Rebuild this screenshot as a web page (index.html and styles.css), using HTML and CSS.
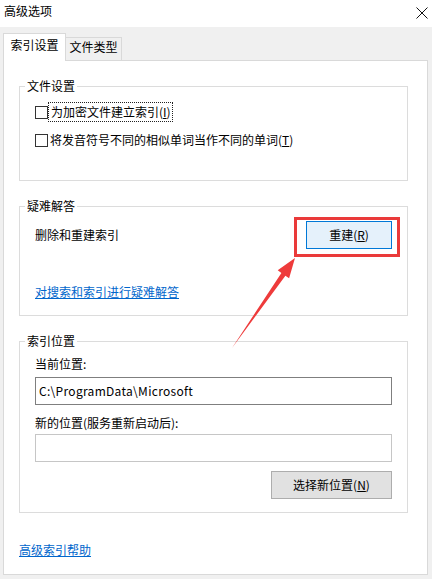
FILE: index.html
```html
<!DOCTYPE html>
<html lang="zh-CN">
<head>
<meta charset="utf-8">
<title>高级选项</title>
<link rel="stylesheet" href="styles.css">
</head>
<body>
<div class="dialog">
  <div class="titlebar">
    <span class="title">高级选项</span>
    <svg class="close" width="12" height="12" viewBox="0 0 12 12"><path d="M0.5 0.5L11.5 11.5M11.5 0.5L0.5 11.5" stroke="#111" stroke-width="1" fill="none"/></svg>
  </div>
  <div class="tabs">
    <div class="tab active">索引设置</div>
    <div class="tab">文件类型</div>
  </div>
  <div class="panel">
    <fieldset class="group">
      <legend>文件设置</legend>
      <div class="group-body g1">
        <div class="check-row"><span class="box"></span><span class="focus">为加密文件建立索引(<u>I</u>)</span></div>
        <div class="check-row"><span class="box"></span><span>将发音符号不同的相似单词当作不同的单词(<u>T</u>)</span></div>
      </div>
    </fieldset>
    <fieldset class="group">
      <legend>疑难解答</legend>
      <div class="group-body g2">
        <div class="rebuild-row">
          <span>删除和重建索引</span>
          <button class="btn btn-default">重建(<u>R</u>)</button>
        </div>
        <a class="link trouble">对搜索和索引进行疑难解答</a>
      </div>
    </fieldset>
    <fieldset class="group">
      <legend>索引位置</legend>
      <div class="group-body g3">
        <div class="label">当前位置:</div>
        <div class="textbox current">C:\ProgramData\Microsoft</div>
        <div class="label label2">新的位置(服务重新启动后):</div>
        <div class="textbox newloc"></div>
        <div class="btn-row"><button class="btn btn-select">选择新位置(<u>N</u>)</button></div>
      </div>
    </fieldset>
    <a class="link help">高级索引帮助</a>
  </div>
</div>
<div class="highlight"></div>
<svg class="arrow" width="432" height="579" viewBox="0 0 432 579">
  <polygon points="232,348 281.4,272.9 277.7,270.3 295,258 289.1,278.3 285.4,275.7" fill="#ee3b3b"/>
</svg>
</body>
</html>
```
FILE: styles.css
```css
* { box-sizing: border-box; }
html, body { margin: 0; padding: 0; }
body {
  width: 432px;
  height: 579px;
  overflow: hidden;
  position: relative;
  background: #f0f0f0;
  font-family: "Noto Sans CJK SC", "Microsoft YaHei", sans-serif;
  font-size: 12px;
  line-height: 16px;
  color: #000;
}
.titlebar {
  height: 27px;
  background: #fff;
  display: flex;
  justify-content: space-between;
  align-items: flex-start;
  padding: 3px 3px 0 4px;
}
.close { margin-top: 4px; margin-right: 1px; }
.tabs {
  height: 33px;
  display: flex;
  align-items: flex-end;
  padding: 6px 0 0 3px;
}
.tab {
  width: 56px;
  height: 23px;
  border: 1px solid #d9d9d9;
  border-left: none;
  border-bottom: none;
  background: #f0f0f0;
  text-align: center;
  padding-top: 1px;
}
.tab.active {
  width: 63px;
  height: 28px;
  border-left: 1px solid #d9d9d9;
  background: #fff;
  position: relative;
  z-index: 1;
  margin-bottom: -1px;
  padding-top: 3px;
}
.panel {
  width: 425px;
  height: 515px;
  margin-left: 3px;
  background: #fff;
  border: 1px solid #d9d9d9;
  padding: 17px 0 0 15px;
}
.group {
  width: 389px;
  margin: 0 0 17px 0;
  padding: 0;
  border: 1px solid #dcdcdc;
  min-width: 0;
}
.group legend {
  margin-left: 5px;
  padding: 0 2px;
  line-height: 16px;
}
.group-body { padding: 0 15px; }
.g1 { padding-top: 10px; padding-bottom: 32px; }
.check-row {
  display: flex;
  align-items: center;
  height: 16px;
}
.check-row + .check-row { margin-top: 12px; }
.box {
  width: 13px;
  height: 13px;
  border: 1px solid #333;
  background: #fff;
  margin-right: 2px;
  flex: none;
}
.focus {
  outline: 1px dotted #222;
  outline-offset: 1px;
  padding-left: 1px;
}
.g2 { padding-top: 7px; padding-bottom: 15px; }
.rebuild-row {
  display: flex;
  justify-content: space-between;
  align-items: center;
  height: 28px;
}
.btn {
  font-family: inherit;
  font-size: 12px;
  line-height: 16px;
  color: #000;
  height: 28px;
  padding: 0;
  margin: 0;
}
.btn-default {
  width: 86px;
  background: #e5f1fb;
  border: 1px solid #0078d7;
}
.link {
  color: #0066cc;
  text-decoration: underline;
  display: block;
  width: max-content;
}
.trouble { margin-top: 35px; }
.g3 { padding-top: 7px; padding-bottom: 13px; }
.label { line-height: 16px; }
.textbox {
  height: 28px;
  width: 357px;
  border: 1px solid #7f7f7f;
  background: #fff;
  padding: 0 3px;
  line-height: 26px;
  margin-top: 5px;
}
.textbox.current { letter-spacing: 0.3px; }
.label2 { margin-top: 10px; }
.textbox.newloc { border-color: #c6c6c6; margin-top: 3px; }
.btn-row {
  display: flex;
  justify-content: flex-end;
  width: 357px;
  margin-top: 9px;
}
.btn-select {
  width: 121px;
  background: #e1e1e1;
  border: 1px solid #adadad;
}
.help { margin-left: 0; margin-top: 29px; }
.highlight {
  position: absolute;
  left: 294px;
  top: 217px;
  width: 106px;
  height: 40px;
  border: 3px solid #ea3a3a;
  pointer-events: none;
}
.arrow {
  position: absolute;
  left: 0;
  top: 0;
  pointer-events: none;
}
```
